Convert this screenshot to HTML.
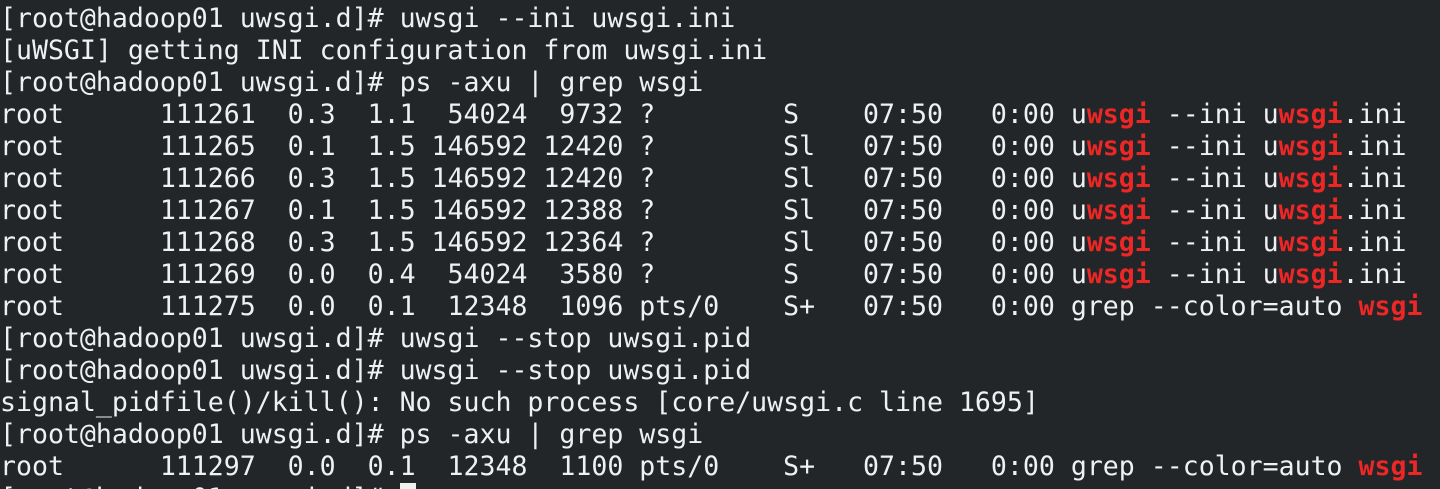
<!DOCTYPE html>
<html><head><meta charset="utf-8"><style>
html,body{margin:0;padding:0;background:#232629;width:1440px;height:489px;overflow:hidden}
pre{margin:0;padding:3px 0 0 0;font-family:"DejaVu Sans Mono","Liberation Mono",monospace;font-size:26.55px;line-height:32px;color:#eff0f1;white-space:pre}
b{color:#ed2626;font-weight:bold}
.c{background:#eff0f1;color:#232629}
</style></head><body><pre>[root@hadoop01 uwsgi.d]# uwsgi --ini uwsgi.ini
[uWSGI] getting INI configuration from uwsgi.ini
[root@hadoop01 uwsgi.d]# ps -axu | grep wsgi
root      111261  0.3  1.1  54024  9732 ?        S    07:50   0:00 u<b>wsgi</b> --ini u<b>wsgi</b>.ini
root      111265  0.1  1.5 146592 12420 ?        Sl   07:50   0:00 u<b>wsgi</b> --ini u<b>wsgi</b>.ini
root      111266  0.3  1.5 146592 12420 ?        Sl   07:50   0:00 u<b>wsgi</b> --ini u<b>wsgi</b>.ini
root      111267  0.1  1.5 146592 12388 ?        Sl   07:50   0:00 u<b>wsgi</b> --ini u<b>wsgi</b>.ini
root      111268  0.3  1.5 146592 12364 ?        Sl   07:50   0:00 u<b>wsgi</b> --ini u<b>wsgi</b>.ini
root      111269  0.0  0.4  54024  3580 ?        S    07:50   0:00 u<b>wsgi</b> --ini u<b>wsgi</b>.ini
root      111275  0.0  0.1  12348  1096 pts/0    S+   07:50   0:00 grep --color=auto <b>wsgi</b>
[root@hadoop01 uwsgi.d]# uwsgi --stop uwsgi.pid
[root@hadoop01 uwsgi.d]# uwsgi --stop uwsgi.pid
signal_pidfile()/kill(): No such process [core/uwsgi.c line 1695]
[root@hadoop01 uwsgi.d]# ps -axu | grep wsgi
root      111297  0.0  0.1  12348  1100 pts/0    S+   07:50   0:00 grep --color=auto <b>wsgi</b>
[root@hadoop01 uwsgi.d]# <span class="c"> </span></pre></body></html>
